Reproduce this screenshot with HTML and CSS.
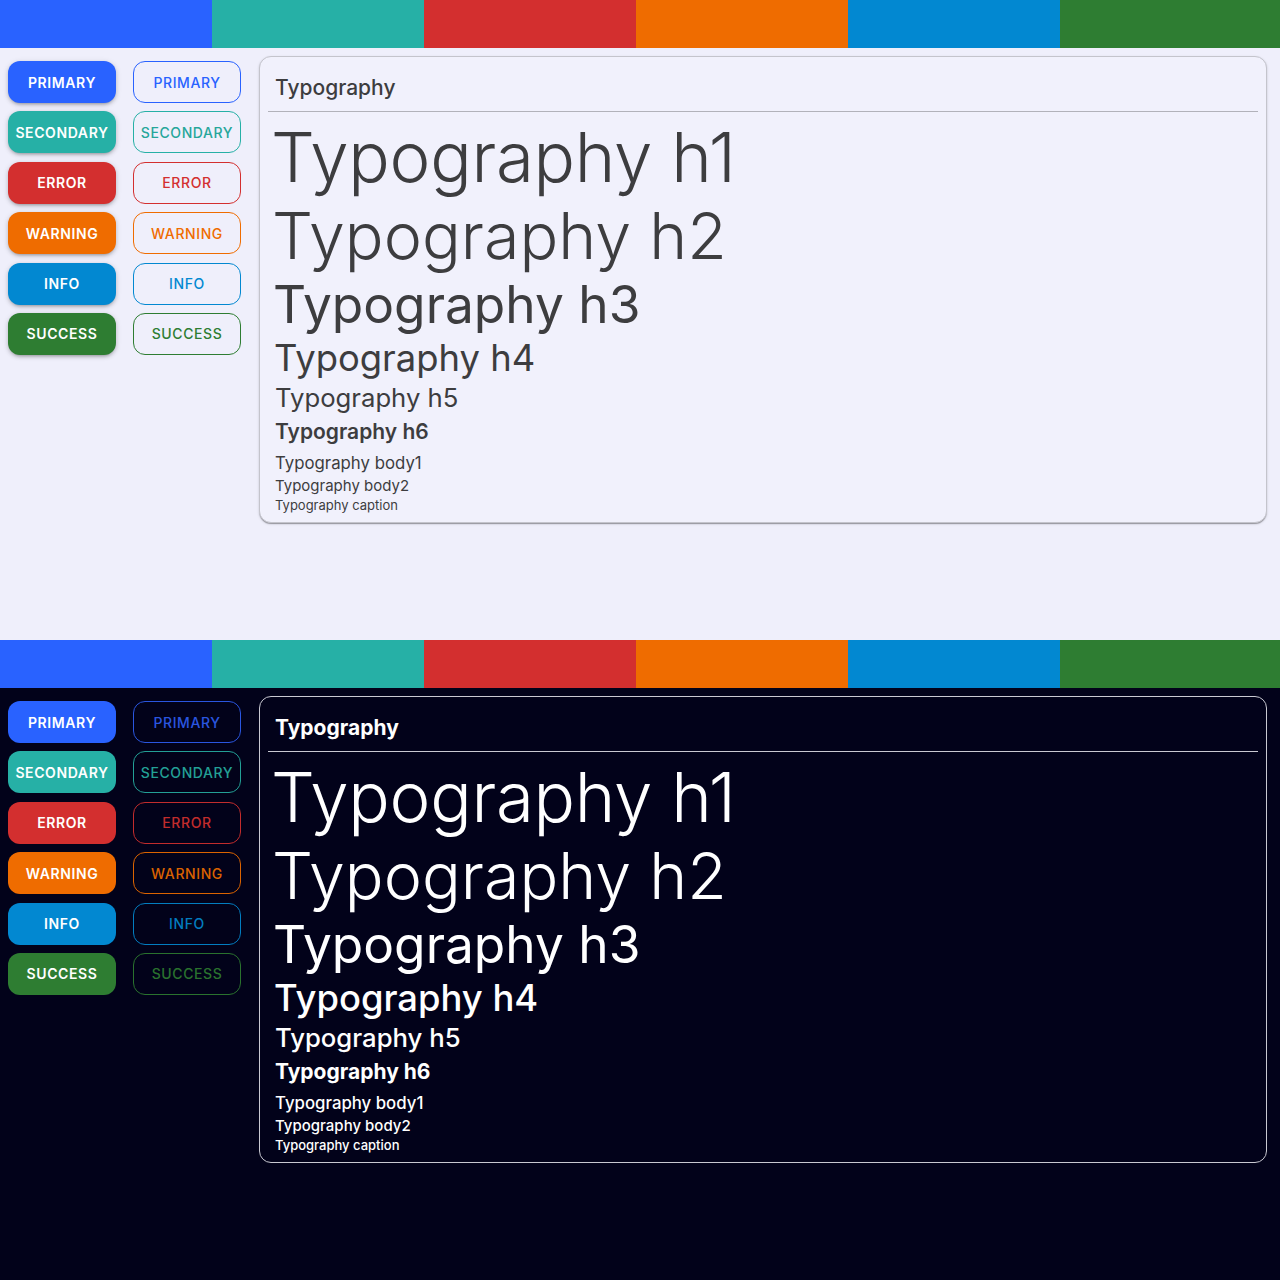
FILE: index.html
```html
<!DOCTYPE html>
<html lang="en">
<head>
  <meta charset="UTF-8" />
  <meta name="viewport" content="width=device-width, initial-scale=1.0"/>
  <title>Theme Preview</title>
  <link rel="stylesheet" href="styles.css">
</head>
<body>

  <!-- light theme -->
  <section class="theme light">
    <div class="palette">
      <span class="swatch primary"></span>
      <span class="swatch secondary"></span>
      <span class="swatch error"></span>
      <span class="swatch warning"></span>
      <span class="swatch info"></span>
      <span class="swatch success"></span>
    </div>

    <div class="main">
      <div class="buttons">
        <button class="btn contained primary">Primary</button>
        <button class="btn outlined primary">Primary</button>
        <button class="btn contained secondary">Secondary</button>
        <button class="btn outlined secondary">Secondary</button>
        <button class="btn contained error">Error</button>
        <button class="btn outlined error">Error</button>
        <button class="btn contained warning">Warning</button>
        <button class="btn outlined warning">Warning</button>
        <button class="btn contained info">Info</button>
        <button class="btn outlined info">Info</button>
        <button class="btn contained success">Success</button>
        <button class="btn outlined success">Success</button>
      </div>

      <div class="card">
        <div class="card-header">
          <h2 class="card-title">Typography</h2>
        </div>
        <div class="card-body">
          <h1 class="t-h1">Typography h1</h1>
          <h2 class="t-h2">Typography h2</h2>
          <h3 class="t-h3">Typography h3</h3>
          <h4 class="t-h4">Typography h4</h4>
          <h5 class="t-h5">Typography h5</h5>
          <h6 class="t-h6">Typography h6</h6>
          <p class="t-body1">Typography body1</p>
          <p class="t-body2">Typography body2</p>
          <span class="t-caption">Typography caption</span>
        </div>
      </div>
    </div>
  </section>

  <!-- dark theme -->
  <section class="theme dark">
    <div class="palette">
      <span class="swatch primary"></span>
      <span class="swatch secondary"></span>
      <span class="swatch error"></span>
      <span class="swatch warning"></span>
      <span class="swatch info"></span>
      <span class="swatch success"></span>
    </div>

    <div class="main">
      <div class="buttons">
        <button class="btn contained primary">Primary</button>
        <button class="btn outlined primary">Primary</button>
        <button class="btn contained secondary">Secondary</button>
        <button class="btn outlined secondary">Secondary</button>
        <button class="btn contained error">Error</button>
        <button class="btn outlined error">Error</button>
        <button class="btn contained warning">Warning</button>
        <button class="btn outlined warning">Warning</button>
        <button class="btn contained info">Info</button>
        <button class="btn outlined info">Info</button>
        <button class="btn contained success">Success</button>
        <button class="btn outlined success">Success</button>
      </div>

      <div class="card">
        <div class="card-header">
          <h2 class="card-title">Typography</h2>
        </div>
        <div class="card-body">
          <h1 class="t-h1">Typography h1</h1>
          <h2 class="t-h2">Typography h2</h2>
          <h3 class="t-h3">Typography h3</h3>
          <h4 class="t-h4">Typography h4</h4>
          <h5 class="t-h5">Typography h5</h5>
          <h6 class="t-h6">Typography h6</h6>
          <p class="t-body1">Typography body1</p>
          <p class="t-body2">Typography body2</p>
          <span class="t-caption">Typography caption</span>
        </div>
      </div>
    </div>
  </section>

</body>
</html>
```
FILE: styles.css
```css
body {
  margin: 0;
  font-family: Inter, "Noto Sans", sans-serif;
}

.theme {
  height: 640px;
}

.theme.light {
  background-color: #efeffb;
  color: #3d3d3f;
}

.theme.dark {
  background-color: #02021a;
  color: #ffffff;
}

/* colour strip */
.palette {
  display: grid;
  grid-template-columns: repeat(5, 212px) 1fr;
  height: 48px;
}

.swatch.primary,
.btn.contained.primary { background-color: #2962ff; }
.swatch.secondary,
.btn.contained.secondary { background-color: #26b0a6; }
.swatch.error,
.btn.contained.error { background-color: #d32f2f; }
.swatch.warning,
.btn.contained.warning { background-color: #ef6c00; }
.swatch.info,
.btn.contained.info { background-color: #0288d1; }
.swatch.success,
.btn.contained.success { background-color: #2e7d32; }

.main {
  display: flex;
  align-items: flex-start;
  padding: 8px 13px 8px 8px;
}

/* buttons */
.buttons {
  display: grid;
  grid-template-columns: 108px 108px;
  column-gap: 17px;
  row-gap: 8.4px;
  margin-top: 5px;
}

.btn {
  height: 42px;
  padding: 0;
  font-family: Inter, "Noto Sans", sans-serif;
  font-size: 14px;
  letter-spacing: 0.6px;
  text-transform: uppercase;
  border-radius: 12px;
  cursor: pointer;
}

.btn.contained {
  border: none;
  color: #ffffff;
  font-weight: 600;
}

.light .btn.contained {
  box-shadow: 0 3px 3px -2px rgba(0, 0, 0, 0.2), 0 2px 4px rgba(0, 0, 0, 0.14), 0 1px 6px rgba(0, 0, 0, 0.1);
}

.btn.outlined {
  background: transparent;
  border: 1px solid;
  font-weight: 500;
}

.light .btn.outlined.primary { color: #2962ff; border-color: #2962ff; }
.light .btn.outlined.secondary { color: #26a69a; border-color: #26b0a6; }
.light .btn.outlined.error { color: #d32f2f; border-color: #d32f2f; }
.light .btn.outlined.warning { color: #ef6c00; border-color: #ef6c00; }
.light .btn.outlined.info { color: #0288d1; border-color: #0288d1; }
.light .btn.outlined.success { color: #2e7d32; border-color: #2e7d32; }

.dark .btn.outlined.primary { color: #2a56e0; border-color: #2a56e0; }
.dark .btn.outlined.secondary { color: #23a096; border-color: #23a096; }
.dark .btn.outlined.error { color: #c22c2c; border-color: #c22c2c; }
.dark .btn.outlined.warning { color: #db6300; border-color: #db6300; }
.dark .btn.outlined.info { color: #027dc0; border-color: #027dc0; }
.dark .btn.outlined.success { color: #2a722e; border-color: #2a722e; }

/* typography card */
.card {
  flex: 1;
  margin-left: 18px;
  border-radius: 12px;
}

.light .card {
  background-color: #f1f1fc;
  border: 1px solid #c4c4cc;
  box-shadow: 0 2px 1px -1px rgba(0, 0, 0, 0.2), 0 1px 1px rgba(0, 0, 0, 0.14), 0 1px 3px rgba(0, 0, 0, 0.12);
}

.dark .card {
  background-color: #02021a;
  border: 1px solid #c9c9d2;
}

.card-header {
  margin: 0 8px;
  padding: 15px 17px 7px 7px;
}

.light .card-header { border-bottom: 1px solid #b2b2ba; }
.dark .card-header { border-bottom: 1px solid #c9c9d2; }

.card-title {
  margin: 0;
  font-size: 21px;
  line-height: 32px;
  font-weight: 500;
}

.dark .card-title { font-weight: 700; }

.card-body {
  padding: 5px 17px 7px 15px;
}

.card-body h1,
.card-body h2,
.card-body h3,
.card-body h4,
.card-body h5,
.card-body h6,
.card-body p {
  margin: 0;
  white-space: nowrap;
}

.t-h1 { font-size: 69px; line-height: 81px; font-weight: 300; letter-spacing: -0.3px; margin-left: -4px !important; }
.t-h2 { font-size: 64.5px; line-height: 76px; font-weight: 300; margin-left: -3px !important; }
.t-h3 { font-size: 51.4px; line-height: 61px; font-weight: 400; margin-left: -2px !important; }
.t-h4 { font-size: 36.4px; line-height: 46px; font-weight: 400; margin-left: -1px !important; }
.t-h5 { font-size: 25.7px; line-height: 33px; font-weight: 400; }
.t-h6 { font-size: 21px; line-height: 35px; font-weight: 600; }
.t-body1 { font-size: 16.8px; line-height: 28px; font-weight: 400; }
.t-body2 { font-size: 15px; line-height: 18px; font-weight: 400; }
.t-caption { display: block; font-size: 13px; line-height: 20px; font-weight: 400; }

.dark .t-h1,
.dark .t-h2,
.dark .t-h3 { font-weight: 300; }
.dark .t-h3 { font-weight: 400; }
.dark .t-h4,
.dark .t-h5 { font-weight: 500; }
.dark .t-h6 { font-weight: 700; }
.dark .t-body1,
.dark .t-body2,
.dark .t-caption { font-weight: 500; }
```
